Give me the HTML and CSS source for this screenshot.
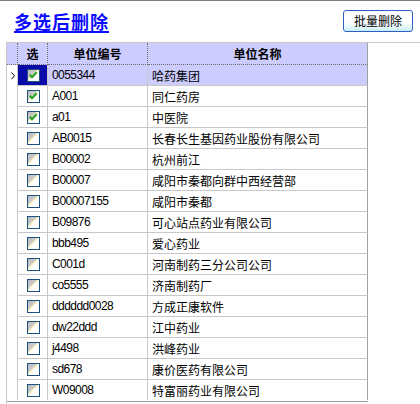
FILE: index.html
```html
<!DOCTYPE html>
<html lang="zh">
<head>
<meta charset="utf-8">
<title>多选后删除</title>
<link rel="stylesheet" href="styles.css">
</head>
<body>
<div class="page">
  <div class="toolbar">
    <span class="title">多选后删除</span>
    <button class="btn" type="button">批量删除</button>
  </div>
  <div class="grid">
    <div class="rows">
      <div class="row head">
        <div class="c ind"></div>
        <div class="c sel">选</div>
        <div class="c code">单位编号</div>
        <div class="c name">单位名称</div>
      </div>
      <div class="row current">
        <div class="c ind"><svg class="arrow" width="5" height="8" viewBox="0 0 5 8"><path d="M0.5 0.5 L3.5 3.8 L0.5 7.2" fill="none" stroke="#000" stroke-width="1"/></svg></div>
        <div class="c sel"><span class="cb"><svg width="11" height="11" viewBox="0 0 11 11"><path d="M1.8 4.8 L4 7.2 L8.6 2.2" fill="none" stroke="#21a121" stroke-width="2"/></svg></span></div>
        <div class="c code">0055344</div>
        <div class="c name">哈药集团</div>
      </div>
      <div class="row">
        <div class="c ind"></div>
        <div class="c sel"><span class="cb"><svg width="11" height="11" viewBox="0 0 11 11"><path d="M1.8 4.8 L4 7.2 L8.6 2.2" fill="none" stroke="#21a121" stroke-width="2"/></svg></span></div>
        <div class="c code">A001</div>
        <div class="c name">同仁药房</div>
      </div>
      <div class="row">
        <div class="c ind"></div>
        <div class="c sel"><span class="cb"><svg width="11" height="11" viewBox="0 0 11 11"><path d="M1.8 4.8 L4 7.2 L8.6 2.2" fill="none" stroke="#21a121" stroke-width="2"/></svg></span></div>
        <div class="c code">a01</div>
        <div class="c name">中医院</div>
      </div>
      <div class="row">
        <div class="c ind"></div>
        <div class="c sel"><span class="cb"></span></div>
        <div class="c code">AB0015</div>
        <div class="c name">长春长生基因药业股份有限公司</div>
      </div>
      <div class="row">
        <div class="c ind"></div>
        <div class="c sel"><span class="cb"></span></div>
        <div class="c code">B00002</div>
        <div class="c name">杭州前江</div>
      </div>
      <div class="row">
        <div class="c ind"></div>
        <div class="c sel"><span class="cb"></span></div>
        <div class="c code">B00007</div>
        <div class="c name">咸阳市秦都向群中西经营部</div>
      </div>
      <div class="row">
        <div class="c ind"></div>
        <div class="c sel"><span class="cb"></span></div>
        <div class="c code">B00007155</div>
        <div class="c name">咸阳市秦都</div>
      </div>
      <div class="row">
        <div class="c ind"></div>
        <div class="c sel"><span class="cb"></span></div>
        <div class="c code">B09876</div>
        <div class="c name">可心站点药业有限公司</div>
      </div>
      <div class="row">
        <div class="c ind"></div>
        <div class="c sel"><span class="cb"></span></div>
        <div class="c code">bbb495</div>
        <div class="c name">爱心药业</div>
      </div>
      <div class="row">
        <div class="c ind"></div>
        <div class="c sel"><span class="cb"></span></div>
        <div class="c code">C001d</div>
        <div class="c name">河南制药三分公司公司</div>
      </div>
      <div class="row">
        <div class="c ind"></div>
        <div class="c sel"><span class="cb"></span></div>
        <div class="c code">co5555</div>
        <div class="c name">济南制药厂</div>
      </div>
      <div class="row">
        <div class="c ind"></div>
        <div class="c sel"><span class="cb"></span></div>
        <div class="c code">dddddd0028</div>
        <div class="c name">方成正康软件</div>
      </div>
      <div class="row">
        <div class="c ind"></div>
        <div class="c sel"><span class="cb"></span></div>
        <div class="c code">dw22ddd</div>
        <div class="c name">江中药业</div>
      </div>
      <div class="row">
        <div class="c ind"></div>
        <div class="c sel"><span class="cb"></span></div>
        <div class="c code">j4498</div>
        <div class="c name">洪峰药业</div>
      </div>
      <div class="row">
        <div class="c ind"></div>
        <div class="c sel"><span class="cb"></span></div>
        <div class="c code">sd678</div>
        <div class="c name">康价医药有限公司</div>
      </div>
      <div class="row">
        <div class="c ind"></div>
        <div class="c sel"><span class="cb"></span></div>
        <div class="c code">W09008</div>
        <div class="c name">特富丽药业有限公司</div>
      </div>
    </div>
  </div>
</div>
</body>
</html>
```
FILE: styles.css
```css
html, body {
  margin: 0;
  padding: 0;
  background: #fff;
  overflow: hidden;
}
.page {
  width: 420px;
  height: 404px;
  border-top: 1px solid #7a7a7a;
  box-sizing: border-box;
  font-family: "Noto Sans CJK SC", sans-serif;
  color: #000;
}
.toolbar {
  height: 41px;
  display: flex;
  align-items: flex-start;
  justify-content: space-between;
}
.title {
  margin: 10px 0 0 14px;
  display: inline-block;
  font-family: "Noto Sans CJK SC", sans-serif;
  font-weight: 700;
  font-size: 18px;
  line-height: 20px;
  letter-spacing: 1px;
  color: #0a0aff;
  border-bottom: 2px solid #0a0aff;
}
.btn {
  margin: 9px 7px 0 0;
  width: 70px;
  height: 22px;
  padding: 0;
  border: 1px solid #2f5fc4;
  border-radius: 3px;
  background: linear-gradient(#ffffff 0%, #ffffff 55%, #e6f8fb 80%, #c4eef6 100%);
  font-family: "Noto Sans CJK SC", sans-serif;
  font-size: 12px;
  line-height: 18px;
  color: #000;
}
.grid {
  margin-left: 6px;
  border-left: 1px solid #c8c8c8;
  border-top: 1px solid #c8c8c8;
  height: 362px;
}
.rows {
  width: 361px;
  border-bottom: 1px solid #a0a0a0;
}
.row {
  display: flex;
  height: 21px;
}
.c {
  box-sizing: border-box;
  height: 21px;
  border-right: 1px solid #c8c8c8;
  border-bottom: 1px solid #c8c8c8;
  display: flex;
  align-items: center;
  white-space: nowrap;
  overflow: hidden;
}
.ind {
  width: 11px;
  border-bottom: none;
}
.sel {
  width: 30px;
  justify-content: center;
  padding-left: 1px;
}
.code {
  width: 100px;
  padding-left: 4px;
  font-family: "Liberation Sans", sans-serif;
  font-size: 12px;
  letter-spacing: -0.55px;
}
.name {
  width: 220px;
  padding-left: 4px;
  font-size: 12px;
  border-right-color: #a0a0a0;
}
.row:last-child .c {
  height: 20px;
  border-bottom: none;
}
.head .c {
  height: 22px;
  background: #ccccff;
  border-right: 1px dotted #6e6e6e;
  border-bottom: 1px dotted #6e6e6e;
  font-family: "Noto Sans CJK SC", sans-serif;
  font-weight: 700;
  font-size: 12px;
  letter-spacing: 0;
  justify-content: center;
  padding: 0;
}
.head {
  height: 22px;
}
.head .c.name {
  border-right: 1px solid #a0a0a0;
}
.current .code,
.current .name {
  background: #ccccff;
}
.current .sel {
  background: #0a0aa8;
}
.arrow {
  display: block;
  margin-left: 4px;
}
.cb {
  width: 13px;
  height: 13px;
  box-sizing: border-box;
  border: 1px solid #1c5180;
  background: linear-gradient(135deg, #bcbcbc 0%, #cacaca 38%, #fff4b8 44%, #fffbe6 50%, #ffffff 56%, #ffffff 100%);
  display: block;
}
.cb svg {
  display: block;
}
```
